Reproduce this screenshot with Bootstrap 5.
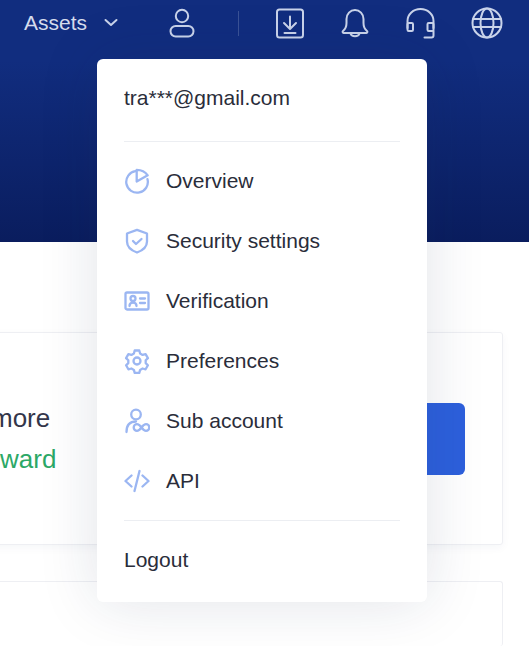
<!DOCTYPE html>
<html lang="en">
	<head>
		<meta charset="UTF-8" />
		<meta name="viewport" content="width=device-width, initial-scale=1.0" />
		<title>Account menu</title>
		<link href="https://cdn.jsdelivr.net/npm/bootstrap@5.3.0/dist/css/bootstrap.min.css" rel="stylesheet" />
		<style>
			html, body { height: 100%; }
			body { font-family: "Liberation Sans", Arial, sans-serif; background: #fff; color: #2a2d3a; overflow: hidden; }
			.hero-band { height: 242px; background: linear-gradient(180deg, #112d7f 0%, #112d7f 25%, #0a1d5e 100%); }
			.top-bar { height: 46px; padding-left: 24px; color: #d5dcec; }
			.top-bar svg { display: block; fill: none; stroke: #c9d3ea; stroke-width: 2; stroke-linecap: round; stroke-linejoin: round; }
			.assets-link { font-size: 21px; line-height: 46px; width: 62px; }
			.chev-slot { width: 83px; padding-left: 18px; }
			.user-slot { width: 69px; }
			.bar-sep { width: 1px; height: 25px; background: #3a5296; margin-right: 37px; }
			.bar-icon { margin-right: 36px; }
			.page-body { padding-top: 90px; padding-right: 26px; margin-left: -20px; }
			.promo-box { height: 213px; border: 1px solid #eeeff3; border-radius: 3px; background: #fff; box-shadow: 0 3px 8px rgba(30, 40, 90, .04); padding-right: 37px; }
			.promo-box.second { height: 65px; margin-top: 36px; border-bottom: 0; box-shadow: none; }
			.promo-text { font-size: 26px; line-height: 41px; }
			.promo-text .cut-one { padding-left: 10px; color: #33364a; }
			.promo-text .cut-two { padding-left: 19px; color: #2ca866; }
			.promo-btn { width: 120px; height: 72px; background: #2d60dc; border-radius: 6px; border: 0; }
			.user-menu { position: absolute; left: 97px; top: 59px; width: 330px; height: 543px; background: #fff; border-radius: 6px; box-shadow: 0 0 60px rgba(25, 35, 80, .13); padding: 0 27px; font-size: 21px; color: #2a2d3a; }
			.menu-mail { height: 83px; line-height: 78px; border-bottom: 1px solid #eceef2; }
			.menu-rows { padding: 9px 0; border-bottom: 1px solid #eceef2; }
			.menu-row { height: 60px; color: #2a2d3a; text-decoration: none; gap: 16px; }
			.menu-row svg { width: 26px; height: 26px; flex: none; fill: none; stroke: #9bb6f2; stroke-width: 2.3; stroke-linecap: round; stroke-linejoin: round; }
			.menu-out { display: block; line-height: 78px; color: #2a2d3a; text-decoration: none; }
		</style>
	</head>
	<body class="position-relative">
		<div class="hero-band">
			<div class="top-bar d-flex align-items-center">
				<div class="assets-link">Assets</div>
				<div class="chev-slot">
					<svg width="14" height="10" viewBox="0 0 14 10"><path d="M1.500 2l5.500 5 5.500-5" /></svg>
				</div>
				<div class="user-slot">
					<svg width="26" height="30" viewBox="0 0 26 30">
						<circle cx="13" cy="8" r="6.200" />
						<rect x="1.500" y="18" width="23" height="10.500" rx="5.200" />
					</svg>
				</div>
				<div class="bar-sep"></div>
				<svg class="bar-icon" width="28" height="31" viewBox="0 0 28 31">
					<rect x="1" y="1.500" width="26" height="28" rx="2.500" />
					<path d="M14 8.500v12M8 15l6 6 6-6M8.500 25h11" />
				</svg>
				<svg class="bar-icon" width="30" height="31" viewBox="0 0 30 31">
					<path d="M3 23c2.500-2 3.500-4 3.500-8v-4a8.500 9 0 0 1 17 0v4c0 4 1 6 3.500 8 .8.700.3 2-.5 2h-23c-.8 0-1.300-1.300-.5-2z" />
					<path d="M10.500 25.500c1 3.500 8 3.500 9 0" />
				</svg>
				<svg class="bar-icon" width="29" height="31" viewBox="0 0 29 31">
					<path d="M1.500 20v-7a13 12 0 0 1 26 0v7" />
					<rect x="1.500" y="15" width="5.500" height="8" rx="1.200" />
					<rect x="21.500" y="15" width="6" height="8" rx="1.200" />
					<path d="M27.500 23v4.500a2 2 0 0 1-2 2h-7" />
				</svg>
				<svg width="32" height="32" viewBox="0 0 32 32">
					<circle cx="16" cy="16" r="14.500" />
					<ellipse cx="16" cy="16" rx="6.500" ry="14.500" />
					<path d="M2 12h28M2 20h28" />
				</svg>
			</div>
		</div>

		<div class="page-body">
			<div class="promo-box d-flex align-items-center justify-content-between">
				<div class="promo-text">
					<div class="cut-one">more</div>
					<div class="cut-two">ward</div>
				</div>
				<button class="promo-btn" type="button" aria-label="Continue"></button>
			</div>
			<div class="promo-box second"></div>
		</div>

		<div class="user-menu">
			<div class="menu-mail">tra***@gmail.com</div>
			<div class="menu-rows">
				<a class="menu-row d-flex align-items-center" href="#">
					<svg viewBox="0 0 26 26"><path d="M11.500 3.200a10.800 10.800 0 1 0 12 8" /><path d="M12.700 13.500V1.800c4.500 0 8.500 1.800 11 5.500z" /></svg>
					<span>Overview</span>
				</a>
				<a class="menu-row d-flex align-items-center" href="#">
					<svg viewBox="0 0 26 26"><path d="M13 1.800l10 3.700v8c0 5.500-5 9.200-10 11-5-1.800-10-5.500-10-11v-8z" /><path d="M9 13l3 3 5.500-5" /></svg>
					<span>Security settings</span>
				</a>
				<a class="menu-row d-flex align-items-center" href="#">
					<svg viewBox="0 0 26 26"><rect x="1.500" y="4.500" width="23" height="17" rx="1.500" /><circle cx="9" cy="10.500" r="2.500" /><path d="M5.500 18c0-4.500 7-4.500 7 0M16 10.500h5M16 15h5" /></svg>
					<span>Verification</span>
				</a>
				<a class="menu-row d-flex align-items-center" href="#">
					<svg viewBox="0 0 26 26"><path d="M10.700 2.500h4.600l.8 3 2.500 1.400 3-.8 2.300 4-2.200 2.200v2.800l2.200 2.200-2.300 4-3-.8-2.500 1.400-.8 3h-4.600l-.8-3-2.500-1.400-3 .8-2.300-4 2.200-2.200v-2.800L2.100 10.100l2.300-4 3 .8 2.500-1.400z" /><circle cx="13" cy="13" r="3.500" /></svg>
					<span>Preferences</span>
				</a>
				<a class="menu-row d-flex align-items-center" href="#">
					<svg viewBox="0 0 26 26"><circle cx="12" cy="6.500" r="4.800" /><path d="M2.500 24c0-7 3.500-10.500 9.500-10.500" /><path d="M17.500 19.500c-1.500-2-2.800-3.300-4.500-3.300a3.300 3.300 0 0 0 0 6.600c1.700 0 3-1.300 4.500-3.300s2.800-3.300 4.500-3.300a3.300 3.300 0 0 1 0 6.600c-1.700 0-3-1.300-4.500-3.300z" /></svg>
					<span>Sub account</span>
				</a>
				<a class="menu-row d-flex align-items-center" href="#">
					<svg viewBox="0 0 26 26"><path d="M7.500 7.500L1.500 13l6 5.500M18.500 7.500l6 5.500-6 5.500M15.500 3l-5 20" /></svg>
					<span>API</span>
				</a>
			</div>
			<a class="menu-out" href="#">Logout</a>
		</div>

		<script src="https://cdn.jsdelivr.net/npm/bootstrap@5.3.0/dist/js/bootstrap.bundle.min.js"></script>
	</body>
</html>
